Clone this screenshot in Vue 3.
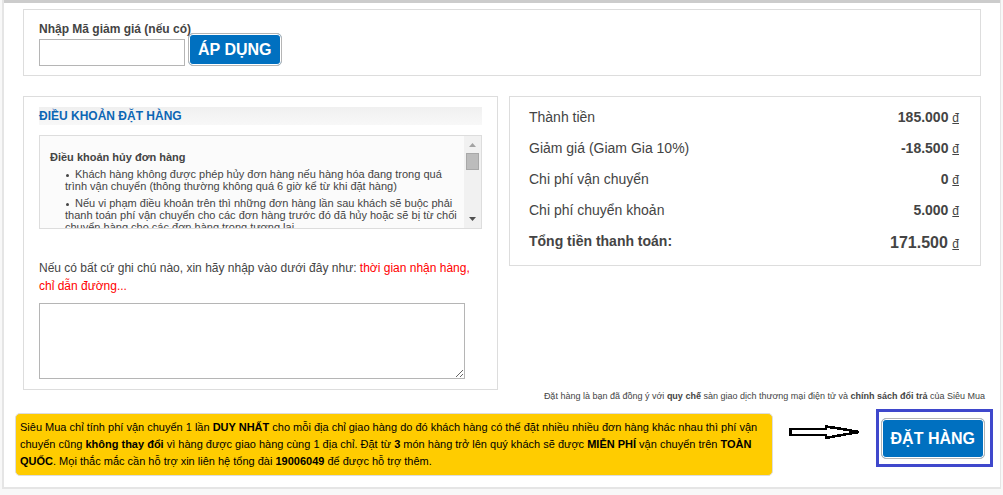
<script setup>
import { ref } from 'vue'

const coupon = ref('')
const note = ref('')

const rows = [
  { label: 'Thành tiền', amount: '185.000' },
  { label: 'Giảm giá (Giam Gia 10%)', amount: '-18.500' },
  { label: 'Chi phí vận chuyển', amount: '0' },
  { label: 'Chi phí chuyển khoản', amount: '5.000' },
  { label: 'Tổng tiền thanh toán:', amount: '171.500', total: true },
]
</script>

<template>
  <main class="checkout">
    <form class="panel coupon" @submit.prevent>
      <label for="coupon">Nhập Mã giảm giá (nếu có)</label>
      <div class="coupon-row">
        <input id="coupon" v-model="coupon" type="text" />
        <button class="action apply" type="submit">ÁP DỤNG</button>
      </div>
    </form>

    <div class="columns">
      <section class="panel terms">
        <h2>ĐIỀU KHOẢN ĐẶT HÀNG</h2>
        <div class="scroller">
          <div class="terms-text">
            <h3>Điều khoản hủy đơn hàng</h3>
            <ul>
              <li>Khách hàng không được phép hủy đơn hàng nếu hàng hóa đang trong quá trình vận chuyển (thông thường không quá 6 giờ kể từ khi đặt hàng)</li>
              <li>Nếu vi phạm điều khoản trên thì những đơn hàng lần sau khách sẽ buộc phải thanh toán phí vận chuyển cho các đơn hàng trước đó đã hủy hoặc sẽ bị từ chối chuyển hàng cho các đơn hàng trong tương lai</li>
            </ul>
          </div>
          <div class="scrollbar" aria-hidden="true">
            <svg width="7" height="4" viewBox="0 0 7 4"><path d="M0 4L3.5 0L7 4Z" fill="#a3a3a3" /></svg>
            <span class="thumb"></span>
            <svg class="down" width="7" height="4" viewBox="0 0 7 4"><path d="M0 0H7L3.5 4Z" fill="#505050" /></svg>
          </div>
        </div>
        <label class="note-label" for="note">
          Nếu có bất cứ ghi chú nào, xin hãy nhập vào dưới đây như:
          <span>thời gian nhận hàng, chỉ dẫn đường...</span>
        </label>
        <textarea id="note" v-model="note"></textarea>
      </section>

      <section class="panel summary">
        <table>
          <tbody>
            <tr v-for="row in rows" :key="row.label" :class="{ total: row.total }">
              <th scope="row">{{ row.label }}</th>
              <td>{{ row.amount }} <span class="currency">đ</span></td>
            </tr>
          </tbody>
        </table>
      </section>
    </div>

    <p class="agreement">
      Đặt hàng là bạn đã đồng ý với <b>quy chế</b> sàn giao dịch thương mại điện tử và <b>chính sách đổi trả</b> của Siêu Mua
    </p>

    <div class="footer">
      <p class="notice">
        Siêu Mua chỉ tính phí vận chuyển 1 lần <b>DUY NHẤT</b> cho mỗi địa chỉ giao hàng do đó khách hàng có thể đặt nhiều nhiều đơn hàng khác nhau thì phí vận chuyển cũng <b>không thay đổi</b> vì hàng được giao hàng cùng 1 địa chỉ. Đặt từ <b>3</b> món hàng trở lên quý khách sẽ được <b>MIỄN PHÍ</b> vận chuyển trên <b>TOÀN QUỐC</b>. Mọi thắc mắc cần hỗ trợ xin liên hệ tổng đài <b>19006049</b> để được hỗ trợ thêm.
      </p>
      <svg class="arrow" width="74" height="16" viewBox="0 0 74 16" aria-hidden="true">
        <path d="M1.500 5H37V2.500L50 4.500L70 8L50 11.500L37 14V11H1.500Z" fill="#fff" stroke="#000" stroke-width="2.600" shape-rendering="crispEdges" />
      </svg>
      <div class="order">
        <button class="action" type="button">ĐẶT HÀNG</button>
      </div>
    </div>
  </main>
</template>

<style>
body {
  margin: 0;
  background: #f8f8f8;
}
</style>

<style scoped>
* {
  box-sizing: border-box;
}

.checkout {
  margin: 0 2px 7px;
  padding: 6px 7px 11px 11px;
  border: solid #e5e5e5;
  border-width: 0 1px 2px 2px;
  box-shadow: inset 0 3px #ccc;
  background: #fff;
  color: #444;
  font: 12px/18px "Liberation Sans", Arial, sans-serif;
}

.panel {
  border: 1px solid #ddd;
}

.coupon {
  margin: 3px 12px 20px 8px;
  padding: 10px 15px 9px;
}

.coupon label {
  display: block;
  font-weight: bold;
  line-height: 18px;
}

.coupon-row {
  display: flex;
  align-items: flex-end;
  gap: 3px;
  margin-top: -5px;
}

.coupon input {
  width: 146px;
  height: 27px;
  padding: 2px 6px;
  border: 1px solid #b5b5b5;
  font: inherit;
}

.action {
  padding: 0 9px;
  border: 1px solid #b5b5b5;
  border-radius: 5px;
  background: #0070c0;
  box-shadow: inset 0 0 0 1px #fff;
  color: #fff;
  font: bold 16px/18px "Liberation Sans", Arial, sans-serif;
  white-space: nowrap;
}

.apply {
  height: 33px;
}

.columns {
  display: grid;
  grid-template-columns: 475fr 472fr;
  align-items: start;
  gap: 11px;
  margin: 0 12px 0 8px;
}

.terms {
  padding: 10px 15px;
}

h2 {
  margin: 0 0 10px;
  background: linear-gradient(#f0f0f0, #f8f8f8);
  color: #0c66b4;
  font-size: 12px;
  font-weight: bold;
  line-height: 18px;
}

.scroller {
  display: flex;
  height: 94px;
  border: 1px solid #ddd;
  background: #fbfbfb;
  overflow: hidden;
}

.terms-text {
  flex: 1;
  padding: 14px 4px 0 10px;
  font-size: 11px;
  line-height: 12px;
}

h3 {
  margin: 0 0 4px;
  font-size: 11px;
  line-height: 14px;
}

ul {
  margin: 0;
  padding: 0 0 0 15px;
  list-style: none;
}

li {
  margin-bottom: 5px;
}

li::before {
  content: "";
  display: inline-block;
  width: 3px;
  height: 3px;
  margin: 0 6px 1px 1px;
  border-radius: 50%;
  background: #444;
}

.scrollbar {
  display: flex;
  flex-direction: column;
  align-items: center;
  width: 17px;
  padding: 7px 0;
  background: #f1f1f1;
}

.thumb {
  width: 13px;
  height: 17px;
  margin-top: 6px;
  border: 1px solid #a8a8a8;
  background: #bcbcbc;
}

.down {
  margin-top: auto;
}

.note-label {
  display: block;
  margin: 30px 0 8px;
}

.note-label span {
  color: #f00;
}

textarea {
  display: block;
  width: calc(100% - 17px);
  height: 76px;
  border: 1px solid #b5b5b5;
  font: inherit;
}

.summary {
  padding: 5px 21px 8px 19px;
}

table {
  width: 100%;
  border-collapse: collapse;
  font-size: 14px;
}

th,
td {
  height: 31px;
  padding: 0;
}

th {
  padding-bottom: 2px;
  font-weight: normal;
  text-align: left;
}

td {
  font-weight: bold;
  text-align: right;
}

.total th {
  font-weight: bold;
}

.total td {
  padding-top: 3px;
  font-size: 16px;
}

.currency {
  font-size: 12px;
  font-weight: normal;
  text-decoration: underline;
}

.agreement {
  margin: -2px 8px 5px 0;
  font-size: 9px;
  line-height: 16px;
  text-align: right;
}

.footer {
  display: flex;
  align-items: flex-start;
}

.notice {
  flex: 1;
  margin: 4px 0 0;
  padding: 5px 4px;
  border: 1px solid #ddd;
  border-radius: 5px;
  background: #fc0;
  color: #000;
  font-size: 11px;
  line-height: 17px;
}

.arrow {
  flex: none;
  margin: 15px 13px 0 16px;
}

.order {
  padding: 6px 5px 5px 2px;
  border: 3px solid #3f48cc;
}

.order .action {
  display: block;
  height: 41px;
}
</style>
